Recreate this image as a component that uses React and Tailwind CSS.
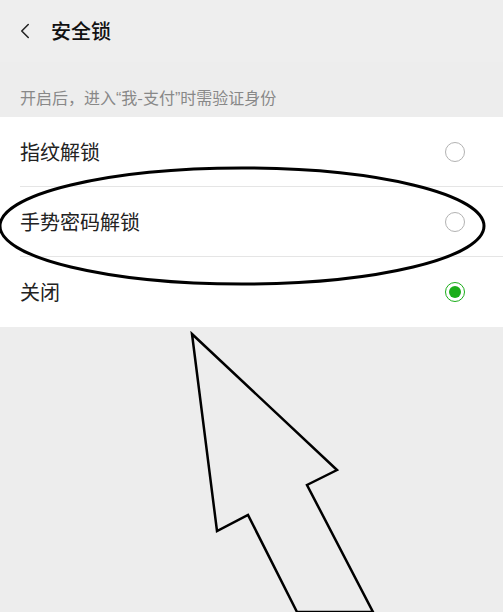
import { ChevronLeft } from 'lucide-react';

const options = [
  { label: '指纹解锁', checked: false },
  { label: '手势密码解锁', checked: false },
  { label: '关闭', checked: true },
];

function Radio({ checked }) {
  if (checked) {
    return (
      <span className="flex h-[20px] w-[20px] items-center justify-center rounded-full border-[1.5px] border-[#1aad19]">
        <span className="h-[12px] w-[12px] rounded-full bg-[#1aad19]" />
      </span>
    );
  }
  return <span className="h-[20px] w-[20px] rounded-full border-[1.5px] border-[#b2b2b2]" />;
}

// narrow latin quotes like the reference
const Q = ({ children }) => (
  <span style={{ fontFamily: '"Liberation Sans", sans-serif' }}>{children}</span>
);

export default function App() {
  return (
    <div
      className="relative h-[612px] w-[503px] overflow-hidden bg-[#ededed]"
      style={{ fontFamily: '"Noto Sans CJK SC", "Noto Sans", sans-serif' }}
    >
      <div className="flex h-[62px] items-center bg-[#eeeeee] pl-[12px]">
        <ChevronLeft className="h-[26px] w-[26px] text-[#222]" strokeWidth={1.4} />
        <span className="ml-[13px] text-[20px] font-medium text-[#111]">安全锁</span>
      </div>

      <div className="flex h-[55px] items-center px-[20px] pt-[16px] text-[16px] leading-[22px] text-[#888]">
        <span>
          开启后，进入<Q>“</Q>我-支付<Q>”</Q>时需验证身份
        </span>
      </div>

      <div className="bg-white">
        {options.map((o, i) => (
          <div key={o.label} className="pl-[20px]">
            <div
              className={`flex h-[70px] items-center justify-between pr-[38px] ${
                i < options.length - 1 ? 'border-b border-[#e5e5e5]' : ''
              }`}
            >
              <span className="text-[20px] text-[#222]">{o.label}</span>
              <Radio checked={o.checked} />
            </div>
          </div>
        ))}
      </div>

      <svg className="pointer-events-none absolute inset-0" width="503" height="612" viewBox="0 0 503 612">
        <ellipse cx="242" cy="226" rx="242" ry="58" fill="none" stroke="#000" strokeWidth="3" />
        <polygon
          points="192,334 337,470 307,485 373,612 297,612 248,515 217,531"
          fill="none"
          stroke="#000"
          strokeWidth="2.5"
          strokeLinejoin="miter"
        />
      </svg>
    </div>
  );
}
